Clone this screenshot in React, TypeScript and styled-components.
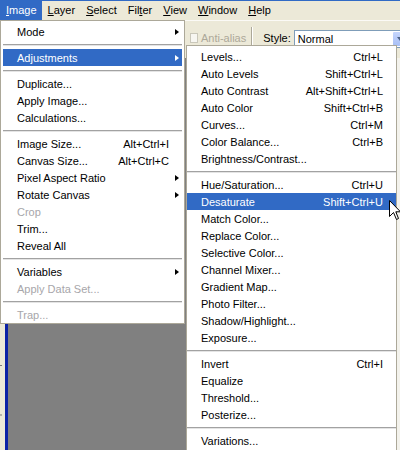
import React, { FC } from "react";
import styled, { createGlobalStyle } from "styled-components";

const GlobalStyle = createGlobalStyle`
  html, body {
    margin: 0;
    padding: 0;
    background: #ece9d8;
  }
  * {
    box-sizing: border-box;
  }
`;

const Screen = styled.div`
  position: relative;
  width: 400px;
  height: 450px;
  overflow: hidden;
  display: flex;
  flex-direction: column;
  background: #ece9d8;
  font-family: "Liberation Sans", Arial, sans-serif;
  font-size: 11px;
  color: #000;
`;

const MenuBar = styled.div`
  display: flex;
  height: 20px;
  flex-shrink: 0;
  border-top: 1px solid #316ac5;
  background: #ece9d8;
`;

const MenuBarItem = styled.div<{ $open?: boolean }>`
  display: flex;
  align-items: center;
  padding: 0 5px 0 6px;
  margin-top: -1px;
  height: 20px;
  white-space: nowrap;
  background: ${(p) => (p.$open ? "#316ac5" : "transparent")};
  color: ${(p) => (p.$open ? "#fff" : "#000")};
`;

const OptionsBar = styled.div`
  display: flex;
  align-items: center;
  height: 38px;
  flex-shrink: 0;
  padding-left: 190px;
  border-top: 1px solid #fbfaf6;
  white-space: nowrap;
  & > * {
    flex-shrink: 0;
  }
`;

const CheckBox = styled.span`
  width: 8px;
  height: 10px;
  margin-top: -4px;
  border: 1px solid #c9c7ba;
  background: #f7f6f1;
`;

const OptionLabel = styled.span<{ $disabled?: boolean }>`
  margin-left: 3px;
  margin-top: -3px;
  color: ${(p) => (p.$disabled ? "#aca899" : "#000")};
`;

const Divider = styled.span`
  width: 2px;
  height: 22px;
  margin: -4px 7px 0 5px;
  border-left: 1px solid #aca899;
  border-right: 1px solid #fff;
`;

const StyleSelect = styled.div`
  display: flex;
  align-items: center;
  width: 115px;
  height: 18px;
  margin-left: 3px;
  margin-top: -2px;
  border: 1px solid #7f9db9;
  background: #fff;
`;

const SelectValue = styled.span`
  flex: 1;
  padding-left: 3px;
`;

const SelectButton = styled.span`
  display: flex;
  align-items: center;
  justify-content: center;
  width: 16px;
  height: 100%;
  border: 1px solid #fff;
  border-radius: 2px;
  background: linear-gradient(#c5d5fc, #a8bff5);

  &::after {
    content: "";
    border-top: 4px solid #4d6185;
    border-left: 3.5px solid transparent;
    border-right: 3.5px solid transparent;
  }
`;

const Workspace = styled.div`
  flex: 1;
  display: flex;
`;

const Ruler = styled.div`
  width: 5px;
  background-color: #ece9d8;
  background-repeat: repeat-y;
  background-position: 0 10px;
  background-size: 2px 49.5px;
  background-image: linear-gradient(to bottom, #7a7a7a 0 1px, transparent 1px);
`;

const ActiveEdge = styled.div`
  width: 3px;
  background: #0b22a6;
`;

const Canvas = styled.div`
  flex: 1;
  background: #808080;
`;

const PaletteEdge = styled.div`
  width: 4px;
  background: #f3f2ec;
`;

const Menu = styled.div<{ $trail: number }>`
  --trail: ${(p) => p.$trail}px;
  position: absolute;
  display: flex;
  flex-direction: column;
  background: #fff;
  border: 1px solid #aca899;
`;

const ImageMenu = styled(Menu)`
  left: 0;
  top: 20px;
  width: 185px;
  padding: 2px 2px 0;
`;

const AdjustMenu = styled(Menu)`
  left: 186px;
  top: 45px;
  width: 211px;
  padding: 2px 0;
`;

const Item = styled.div<{ $active?: boolean; $disabled?: boolean }>`
  display: flex;
  align-items: center;
  height: 17px;
  padding-left: 14px;
  white-space: nowrap;
  background: ${(p) => (p.$active ? "#316ac5" : "transparent")};
  color: ${(p) => (p.$active ? "#fff" : p.$disabled ? "#a7a6aa" : "#000")};
`;

const ItemLabel = styled.span`
  flex: 1;
`;

const Shortcut = styled.span`
  text-align: right;
`;

const ArrowSlot = styled.span`
  display: flex;
  justify-content: flex-end;
  width: var(--trail);
  padding-right: 3px;
`;

const Arrow = styled.span`
  width: 0;
  height: 0;
  border-left: 4px solid currentColor;
  border-top: 3.5px solid transparent;
  border-bottom: 3.5px solid transparent;
`;

const Separator = styled.div`
  height: 9px;
  padding-top: 4px;
  &::after {
    content: "";
    display: block;
    height: 1px;
    background: #a2a2a2;
    box-shadow: 0 1px 0 #e4e4e4;
  }
`;

const Pointer = styled.svg`
  position: absolute;
  left: 389px;
  top: 200px;
`;

type Entry =
  | "sep"
  | {
      label: string;
      keys?: string;
      sub?: boolean;
      active?: boolean;
      disabled?: boolean;
    };

const imageEntries: Entry[] = [
  { label: "Mode", sub: true },
  "sep",
  { label: "Adjustments", sub: true, active: true },
  "sep",
  { label: "Duplicate..." },
  { label: "Apply Image..." },
  { label: "Calculations..." },
  "sep",
  { label: "Image Size...", keys: "Alt+Ctrl+I" },
  { label: "Canvas Size...", keys: "Alt+Ctrl+C" },
  { label: "Pixel Aspect Ratio", sub: true },
  { label: "Rotate Canvas", sub: true },
  { label: "Crop", disabled: true },
  { label: "Trim..." },
  { label: "Reveal All" },
  "sep",
  { label: "Variables", sub: true },
  { label: "Apply Data Set...", disabled: true },
  "sep",
  { label: "Trap...", disabled: true },
];

const adjustEntries: Entry[] = [
  { label: "Levels...", keys: "Ctrl+L" },
  { label: "Auto Levels", keys: "Shift+Ctrl+L" },
  { label: "Auto Contrast", keys: "Alt+Shift+Ctrl+L" },
  { label: "Auto Color", keys: "Shift+Ctrl+B" },
  { label: "Curves...", keys: "Ctrl+M" },
  { label: "Color Balance...", keys: "Ctrl+B" },
  { label: "Brightness/Contrast..." },
  "sep",
  { label: "Hue/Saturation...", keys: "Ctrl+U" },
  { label: "Desaturate", keys: "Shift+Ctrl+U", active: true },
  { label: "Match Color..." },
  { label: "Replace Color..." },
  { label: "Selective Color..." },
  { label: "Channel Mixer..." },
  { label: "Gradient Map..." },
  { label: "Photo Filter..." },
  { label: "Shadow/Highlight..." },
  { label: "Exposure..." },
  "sep",
  { label: "Invert", keys: "Ctrl+I" },
  { label: "Equalize" },
  { label: "Threshold..." },
  { label: "Posterize..." },
  "sep",
  { label: "Variations..." },
];

const menuBar: [string, string, string][] = [
  ["", "I", "mage"],
  ["", "L", "ayer"],
  ["", "S", "elect"],
  ["Fil", "t", "er"],
  ["", "V", "iew"],
  ["", "W", "indow"],
  ["", "H", "elp"],
];

const MenuEntries: FC<{ entries: Entry[] }> = ({ entries }) => (
  <>
    {entries.map((e, i) =>
      e === "sep" ? (
        <Separator key={i} />
      ) : (
        <Item key={i} $active={e.active} $disabled={e.disabled}>
          <ItemLabel>{e.label}</ItemLabel>
          {e.keys && <Shortcut>{e.keys}</Shortcut>}
          <ArrowSlot>{e.sub && <Arrow />}</ArrowSlot>
        </Item>
      )
    )}
  </>
);

const App: FC = () => {
  return (
    <Screen>
      <GlobalStyle />
      <MenuBar>
        {menuBar.map(([pre, key, rest], i) => (
          <MenuBarItem key={i} $open={i === 0}>
            {pre}
            <u>{key}</u>
            {rest}
          </MenuBarItem>
        ))}
      </MenuBar>

      <OptionsBar>
        <CheckBox />
        <OptionLabel $disabled>Anti-alias</OptionLabel>
        <Divider />
        <OptionLabel>Style:</OptionLabel>
        <StyleSelect>
          <SelectValue>Normal</SelectValue>
          <SelectButton />
        </StyleSelect>
      </OptionsBar>

      <Workspace>
        <Ruler />
        <ActiveEdge />
        <Canvas />
        <PaletteEdge />
      </Workspace>

      <ImageMenu $trail={13}>
        <MenuEntries entries={imageEntries} />
      </ImageMenu>

      <AdjustMenu $trail={13}>
        <MenuEntries entries={adjustEntries} />
      </AdjustMenu>

      <Pointer width="13" height="21" viewBox="0 0 13 21">
        <path
          d="M0.5 0.5 L0.5 16.5 L4.5 12.5 L7.5 19.5 L9.5 18.5 L6.8 11.8 L11.5 11.8 Z"
          fill="#fff"
          stroke="#000"
          strokeWidth="1"
          strokeLinejoin="miter"
        />
      </Pointer>
    </Screen>
  );
};

export default App;
